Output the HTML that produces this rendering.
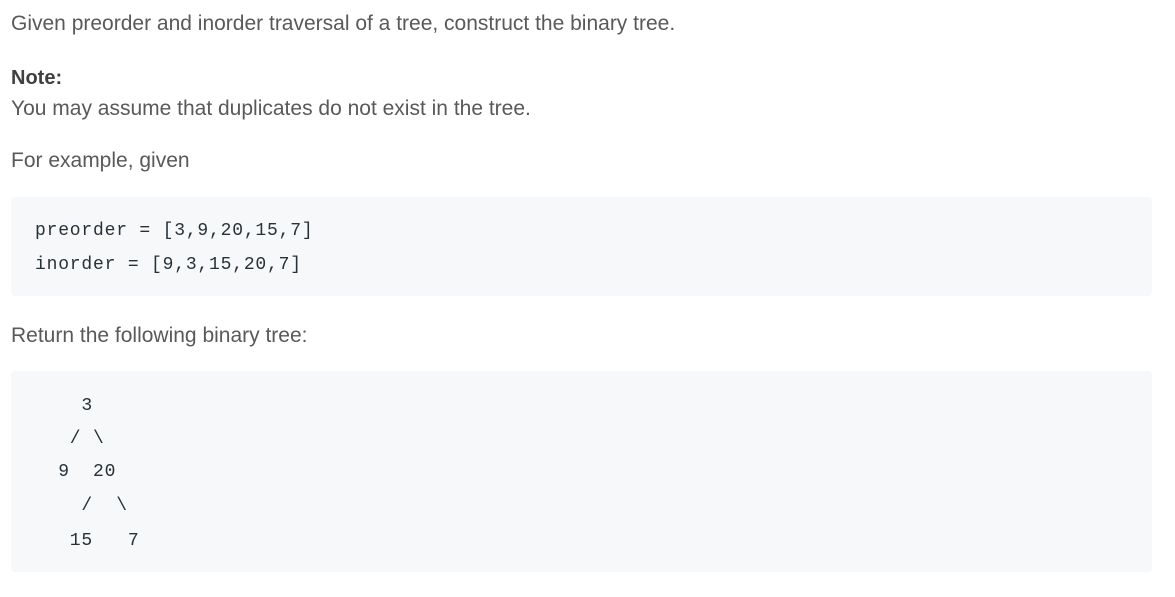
<!DOCTYPE html>
<html><head><meta charset="utf-8"><style>
body{margin:0;background:#fff;width:1175px;height:597px;overflow:hidden;font-family:"Liberation Sans",sans-serif;color:#595959;}
.t{position:absolute;left:11px;font-size:21px;line-height:24px;white-space:nowrap}
.b{font-weight:bold;color:#404040;font-size:20px}
.pre{position:absolute;left:11px;width:1141px;background:#f7f8fa;border-radius:4px}
.c{position:absolute;left:35px;font-family:"Liberation Mono",monospace;font-size:18px;letter-spacing:0.8px;color:#263238;white-space:pre;line-height:20px}
</style></head><body>
<div class="t" style="top:12px">Given preorder and inorder traversal of a tree, construct the binary tree.</div>
<div class="t b" style="top:66px">Note:</div>
<div class="t" style="top:97px">You may assume that duplicates do not exist in the tree.</div>
<div class="t" style="top:149px">For example, given</div>
<div class="pre" style="top:197px;height:99px"></div>
<div class="c" style="top:221px">preorder = [3,9,20,15,7]</div>
<div class="c" style="top:255px">inorder = [9,3,15,20,7]</div>
<div class="t" style="top:324px">Return the following binary tree:</div>
<div class="pre" style="top:371px;height:201px"></div>
<div class="c" style="top:396px">    3</div>
<div class="c" style="top:429px">   / \</div>
<div class="c" style="top:462px">  9  20</div>
<div class="c" style="top:496px">    /  \</div>
<div class="c" style="top:531px">   15   7</div>
</body></html>
